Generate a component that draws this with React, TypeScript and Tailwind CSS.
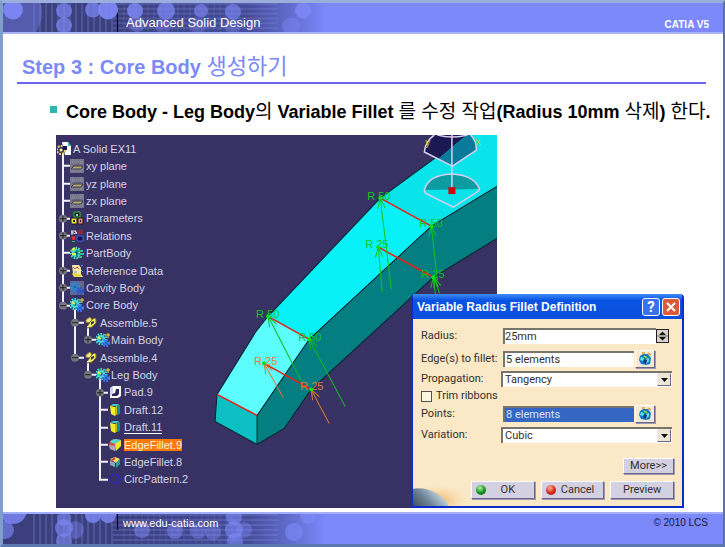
import { ReactNode } from 'react';
import { clsx } from 'clsx';

type IconName =
  | 'part' | 'plane' | 'params' | 'relations' | 'body' | 'reference' | 'cavity'
  | 'gearPlus' | 'assemble' | 'pad' | 'draft' | 'fillet' | 'filletSmall' | 'pattern';

type TreeRow = {
  label: string;
  icon: IconName;
  depth: number;
  knob?: '+' | '-';
  // depths whose rail passes through this row
  through?: number[];
  last?: boolean;
  opens?: boolean;
  mark?: 'underline' | 'selected';
};

const treeRows: TreeRow[] = [
  { label: 'A Solid EX11', icon: 'part', depth: 0, opens: true },
  { label: 'xy plane', icon: 'plane', depth: 1 },
  { label: 'yz plane', icon: 'plane', depth: 1 },
  { label: 'zx plane', icon: 'plane', depth: 1 },
  { label: 'Parameters', icon: 'params', depth: 1, knob: '+' },
  { label: 'Relations', icon: 'relations', depth: 1, knob: '+' },
  { label: 'PartBody', icon: 'body', depth: 1 },
  { label: 'Reference Data', icon: 'reference', depth: 1, knob: '+' },
  { label: 'Cavity Body', icon: 'cavity', depth: 1, knob: '+' },
  { label: 'Core Body', icon: 'gearPlus', depth: 1, knob: '-', last: true, opens: true },
  { label: 'Assemble.5', icon: 'assemble', depth: 2, knob: '-', opens: true },
  { label: 'Main Body', icon: 'gearPlus', depth: 3, knob: '+', through: [2], last: true },
  { label: 'Assemble.4', icon: 'assemble', depth: 2, knob: '-', last: true, opens: true },
  { label: 'Leg Body', icon: 'gearPlus', depth: 3, knob: '-', last: true, opens: true },
  { label: 'Pad.9', icon: 'pad', depth: 4, knob: '+' },
  { label: 'Draft.12', icon: 'draft', depth: 4 },
  { label: 'Draft.11', icon: 'draft', depth: 4, mark: 'underline' },
  { label: 'EdgeFillet.9', icon: 'fillet', depth: 4, mark: 'selected' },
  { label: 'EdgeFillet.8', icon: 'filletSmall', depth: 4 },
  { label: 'CircPattern.2', icon: 'pattern', depth: 4, last: true },
];

const railX = [0, 7, 19, 32, 44];
const railWidth = [1, 14, 28, 40, 52];

function Gear({ cx, cy, r, color }: { cx: number; cy: number; r: number; color: string }) {
  return (
    <g>
      <circle cx={cx} cy={cy} r={r} fill="none" stroke={color} strokeWidth="2.4" strokeDasharray="1.6 1.2" />
      <circle cx={cx} cy={cy} r={r - 1} fill={color} />
      <circle cx={cx} cy={cy} r={r / 3} fill="#1a5f9a" />
    </g>
  );
}

function TreeIcon({ name }: { name: IconName }) {
  const drawings: Record<IconName, ReactNode> = {
    part: (
      <>
        <path d="M5 0h6l3 4v9H8z" fill="#fff" />
        <path d="M11 0l3 4h-3z" fill="#28b8b0" />
        <circle cx="4" cy="8" r="4" fill="#3b3560" stroke="#e6cf7a" strokeWidth="2" strokeDasharray="2 1" />
        <circle cx="4" cy="8" r="1.5" fill="#fff3a8" />
        <path d="M6 4h4v4H6z" fill="#1a1840" />
      </>
    ),
    plane: (
      <>
        <path d="M0 0h14v14H0z" fill="#77768a" />
        <path d="M0 3h14M0 11h14M3 0v14M11 0v14" stroke="#918fa2" strokeWidth="1" strokeDasharray="1 1" />
        <path d="M1 10l3-3h9l-2 3z" fill="#b5a86c" stroke="#3d3c50" />
        <path d="M2 7l2-1h8" stroke="#55546a" fill="none" />
      </>
    ),
    params: (
      <>
        <path d="M4 1h6v5H4z" fill="#141414" stroke="#36c33b" />
        <path d="M1 7h6v6H1z" fill="#e4e13a" stroke="#1b1b1b" />
        <path d="M8 7h5v6H8z" fill="#e9876b" stroke="#1b1b1b" />
        <path d="M3 9h2v2H3zM10 9h1v2h-1z" fill="#24235f" />
        <path d="M6 3h2v2H6z" fill="#70f0ff" />
      </>
    ),
    relations: (
      <>
        <path d="M1 2h5M1 4h3M2 2v4M4 5l3-2M5 2l2 3" stroke="#e9e6f5" />
        <path d="M8 1h5v4H8z" fill="#8d2735" />
        <path d="M7 7h6v5H7z" fill="#10104a" stroke="#5260e8" />
        <circle cx="3.5" cy="9" r="2" fill="#ea2c2c" />
        <path d="M2 12h3v1H2z" fill="#31c840" />
      </>
    ),
    body: (
      <>
        <Gear cx={6} cy={7} r={5} color="#48e0c4" />
        <path d="M2 4l3-2M2 8h4" stroke="#e6f04a" strokeWidth="2" />
        <path d="M8 5h5M8 8h6M8 11h4" stroke="#2bc07e" strokeWidth="2" />
        <path d="M7 4v7" stroke="#14307c" />
      </>
    ),
    reference: (
      <>
        <path d="M2 1h7l2 3v6l2 3H5L3 9z" fill="#f5e6b2" />
        <path d="M3 3l2 2 2-2 2 2" stroke="#c8503a" fill="none" />
        <path d="M2 10c3-3 5 1 9 0v3H4z" fill="#e8d34c" />
        <path d="M11 2l2-1M11 6l2 2M4 8h3" stroke="#4ba3f0" strokeWidth="1" />
      </>
    ),
    cavity: (
      <>
        <path d="M0 0h14v14H0z" fill="#66658a" />
        <path d="M1 2h12M1 6h12M1 10h12M2 0v14M6 0v14" stroke="#2b82cc" strokeDasharray="1 1" />
        <Gear cx={5} cy={6} r={4} color="#3184cf" />
        <Gear cx={10} cy={10} r={3} color="#3050d0" />
      </>
    ),
    gearPlus: (
      <>
        <Gear cx={5} cy={6} r={5} color="#3fdcd2" />
        <path d="M2 4l3 2" stroke="#f0ee55" strokeWidth="2" />
        <Gear cx={10} cy={10} r={3} color="#3d78f0" />
        <path d="M12 0v5M9 2h5" stroke="#f0e23c" strokeWidth="1" />
      </>
    ),
    assemble: (
      <>
        <path d="M2 4l4-3 2 3-2 3-4-1z" fill="#efe98a" stroke="#9b8c2e" />
        <path d="M6 6l4-4 2 1v4l-4 4-5 1z" fill="#f0e85e" stroke="#7c7125" />
        <path d="M7 6l3-1v2L7 9z" fill="#35306a" />
        <path d="M3 11l3-2" stroke="#fff" />
      </>
    ),
    pad: (
      <>
        <path d="M2 3l3-2h8v10l-3 2H2z" fill="#fff" />
        <path d="M8 4h3v5l-2 2H4V9l3-1z" fill="#2c2858" />
        <path d="M2 3l3-1v6l-3 4z" fill="#d4cfe8" />
      </>
    ),
    draft: (
      <>
        <path d="M2 3l3-2h6L9 3z" fill="#42c8cc" />
        <path d="M2 3l5 1v9l-4-2z" fill="#f4ec28" />
        <path d="M7 4l4-2v8l-4 3z" fill="#c6b70c" />
        <path d="M9 3l3-1v9l-3 1z" fill="#148b98" />
      </>
    ),
    fillet: (
      <>
        <path d="M1 6Q2 1 8 1l5 1-5 5v6l-6-2z" fill="#d95048" />
        <path d="M2 4Q4 1 8 1l5 1-6 4z" fill="#54d8ce" />
        <path d="M7 6l6-4v6l-5 5z" fill="#f3e43b" />
        <path d="M1 7l6 1v5l-5-2z" fill="#a9a7ba" />
      </>
    ),
    filletSmall: (
      <>
        <path d="M2 4l5-2 5 2-4 4z" fill="#efe45a" />
        <path d="M2 5l5 3v4l-5-2z" fill="#87a7b8" />
        <path d="M8 8l4-4v5l-4 4z" fill="#2a9e9a" />
        <path d="M3 6l4-3" stroke="#cf4640" strokeWidth="2" />
      </>
    ),
    pattern: (
      <circle cx="7" cy="7" r="4.5" fill="none" stroke="#2423e0" strokeWidth="2" strokeDasharray="2 1.5" />
    ),
  };
  return (
    <svg className="size-[14px] shrink-0" viewBox="0 0 14 14" aria-hidden="true">
      {drawings[name]}
    </svg>
  );
}

function Rails({ row }: { row: TreeRow }) {
  const x = railX[row.depth];
  const next = railX[row.depth + 1];
  return (
    <svg
      className="h-full shrink-0 overflow-visible"
      width={railWidth[row.depth]}
      viewBox={`0 0 ${railWidth[row.depth]} 18`}
      preserveAspectRatio="none"
      aria-hidden="true"
    >
      <g stroke="#f2f0fa" strokeWidth="2">
        {row.through?.map((d) => <path key={d} d={`M${railX[d]} -1v20`} />)}
        {row.opens && <path d={`M${next} 13v6`} />}
        {row.depth > 0 && <path d={`M${x} -1V${row.last ? 10 : 19}M${x} 9H${railWidth[row.depth]}`} />}
      </g>
      {row.knob && (
        <g>
          <circle cx={x} cy="9" r="4" fill="#77767c" />
          <path d={`M${x - 3} 9h6`} stroke="#1f1e26" strokeWidth="1" />
          {row.knob === '+' && <path d={`M${x} 6v6`} stroke="#1f1e26" strokeWidth="1" />}
        </g>
      )}
    </svg>
  );
}

function SpecTree() {
  return (
    <ul className="flex h-[348px] w-[154px] shrink-0 flex-col text-[11px] leading-3 text-[#d5d2e4]">
      {treeRows.map((row) => (
        <li key={row.label} className="flex min-h-0 flex-1 items-center whitespace-nowrap">
          <Rails row={row} />
          <TreeIcon name={row.icon} />
          <span
            className={clsx(
              row.depth === 3 ? 'ml-px' : 'ml-[2px]',
              row.mark === 'underline' && 'border-b border-white',
              row.mark === 'selected' && 'bg-[#ff7a0a] text-[#fff3d8]',
            )}
          >
            {row.label}
          </span>
        </li>
      ))}
    </ul>
  );
}

const arrows = [
  { from: [382, 292], to: [378, 247], color: '#12c41c' },
  { from: [391, 289], to: [380, 198], color: '#12c41c' },
  { from: [437, 280], to: [431, 226], color: '#12c41c' },
  { from: [435, 294], to: [433, 277], color: '#12c41c' },
  { from: [439, 293], to: [434, 277], color: '#12c41c' },
  { from: [301, 380], to: [268, 316], color: '#12b81c' },
  { from: [345, 406], to: [309, 339], color: '#12b81c' },
  { from: [283, 397], to: [264, 363], color: '#d9762c' },
  { from: [329, 423], to: [311, 389], color: '#d9762c' },
];

const radii = [
  { x: 367, y: 200, text: 'R 50', color: '#12c41c' },
  { x: 419, y: 227, text: 'R 50', color: '#12c41c' },
  { x: 365, y: 248, text: 'R 25', color: '#12c41c' },
  { x: 421, y: 278, text: 'R 25', color: '#12c41c' },
  { x: 256, y: 318, text: 'R 50', color: '#12c41c' },
  { x: 298, y: 341, text: 'R 50', color: '#12c41c' },
  { x: 254, y: 365, text: 'R 25', color: '#e27f33' },
  { x: 300, y: 390, text: 'R 25', color: '#e27f33' },
];

const nodes = [[380, 198], [431, 226], [378, 247], [433, 277], [268, 316], [309, 339], [264, 363], [311, 389]];

function Arrow({ from, to, color }: { from: number[]; to: number[]; color: string }) {
  const angle = Math.atan2(from[1] - to[1], from[0] - to[0]);
  const wing = (turn: number) =>
    `M${to[0]} ${to[1]}L${to[0] + 11 * Math.cos(angle + turn)} ${to[1] + 11 * Math.sin(angle + turn)}`;
  return <path d={`M${from[0]} ${from[1]}L${to[0]} ${to[1]}${wing(0.35)}${wing(-0.35)}`} stroke={color} />;
}

function LegModel() {
  return (
    <svg
      className="h-[373px] min-w-0 flex-1"
      viewBox="210 135 287 373"
      preserveAspectRatio="xMaxYMin slice"
      role="img"
      aria-label="Leg body with variable fillet radii"
    >
      <path d="M380 198L466 135H497V186L431 226z" fill="#08e4ea" />
      <path d="M268 316L380 198L431 226L309 339z" fill="#08f1f8" />
      <path d="M217 394L256 331L268 316L309 339L257 415z" fill="#5cfdff" />
      <path d="M257 415L309 339L431 226L497 186V238L433 277L311 389L284 428L257 444z" fill="#047e80" />
      <path d="M217 394L257 415V444L215 421z" fill="#0bbfc3" />
      <path
        d="M466 135L380 198L268 316L256 331L217 394L215 421L257 444L284 428L311 389L433 277L497 238M257 444V415L309 339L431 226L497 186"
        fill="none"
        stroke="#06232e"
      />
      <path
        d="M380 198L431 226M378 247L433 277M268 316L309 339M264 363L311 389M217 394L257 415"
        stroke="#ee1c12"
        strokeWidth="1.5"
      />
      <g fill="none">
        {arrows.map((a, i) => <Arrow key={i} {...a} />)}
      </g>
      <g fontSize="11" fontFamily="Liberation Sans, sans-serif">
        {radii.map((r, i) => <text key={i} x={r.x} y={r.y} fill={r.color}>{r.text}</text>)}
      </g>
      {nodes.map(([x, y]) => <circle key={`${x}-${y}`} cx={x} cy={y} r="2" fill="#0be010" />)}

      {/* compass */}
      <path d="M424 152Q425 142 433 135H466L438 159z" fill="#1c1852" />
      <path d="M438 159L466 135H471Q476 140 476 150L452 166z" fill="#087b9a" />
      <path d="M424 190Q428 175 451 174Q474 175 479 189z" fill="#0b9ba0" />
      <g fill="none" stroke="#dccdf2" strokeWidth="1.5">
        <path d="M434 135Q425 141 424 152L452 166L476 150Q476 140 470 135M437 135Q452 139 467 135" />
        <path d="M424 190Q428 175 451 174Q474 175 479 189L478 191L453 207L425 193z" />
        <path d="M451.500 135V188" />
      </g>
      <path d="M448 187h7v7h-7z" fill="#d00808" />
      <g fontSize="10" fontFamily="Liberation Sans, sans-serif" fill="#c8c424">
        <text x="425" y="146">y</text>
        <text x="475" y="145">x</text>
      </g>
    </svg>
  );
}

function PickIcon() {
  return (
    <svg className="size-[14px]" viewBox="0 0 14 14" aria-hidden="true">
      <path d="M2 4l3-2h5l3 4-1 6-4 1-5-1-2-4z" fill="#1878c8" />
      <path d="M3 5l3 1-1 3-3-1zM8 7l3-1v3l-3 3z" fill="#5fe0e8" />
      <path d="M5 10l2-3 2 1-1 4z" fill="#10307c" />
      <path d="M4 1h3M10 1l3 2" stroke="#e09a2e" strokeWidth="1.5" />
      <path d="M6 4l3 2" stroke="#7fd23c" strokeWidth="2" />
    </svg>
  );
}

const sunken = 'border-t-2 border-l-2 border-[#77746c]';
const raised = 'border border-t-white border-l-white border-r-[#69668a] border-b-[#69668a] shadow-[1px_1px_0_#9c99b5]';

function PickField({ id, label, value, active }: { id: string; label: string; value: string; active?: boolean }) {
  return (
    <>
      <label htmlFor={id} className="w-[82px] shrink-0">{label}</label>
      <input
        id={id}
        readOnly
        defaultValue={value}
        className={clsx('h-4 w-[131px] min-w-0 rounded-none pl-px outline-none', sunken, active ? 'bg-[#3467c4] text-[#d9e4fa]' : 'bg-white')}
      />
      <button type="button" aria-label={`Edit ${label}`} className={clsx('ml-px flex h-[18px] w-5 items-center justify-center bg-[#f3ead6]', raised)}>
        <PickIcon />
      </button>
    </>
  );
}

function SelectField({ id, label, value }: { id: string; label: string; value: string }) {
  return (
    <>
      <label htmlFor={id} className="w-20 shrink-0">{label}</label>
      <div className="relative flex-1">
        <select id={id} defaultValue={value} className={clsx('block h-4 w-full appearance-none rounded-none bg-white pl-[2px] leading-3 outline-none', sunken)}>
          <option>{value}</option>
        </select>
        <span className="pointer-events-none absolute top-[2px] right-px flex h-[13px] w-[14px] items-center justify-center border border-[#efe8da] border-r-[#69668a] border-b-[#69668a] bg-[#ece5d8]">
          <svg className="h-[4px] w-[7px]" viewBox="0 0 7 4" aria-hidden="true"><path d="M0 0h7L3.500 4z" fill="#111" /></svg>
        </span>
      </div>
    </>
  );
}

function ActionButton({ children, dot }: { children: ReactNode; dot?: 'green' | 'red' }) {
  return (
    <button type="button" className={clsx('flex h-[18px] flex-1 items-center bg-[#d3d0e2] px-1 leading-3', raised)}>
      {dot && (
        <span
          className={clsx(
            'size-[10px] shrink-0 rounded-full',
            dot === 'green'
              ? 'bg-[radial-gradient(circle_at_40%_30%,#b8f0a8,#1c9a22_50%,#0b5a10)]'
              : 'bg-[radial-gradient(circle_at_40%_30%,#ffb8a0,#d8301c_50%,#7c140c)]',
          )}
        />
      )}
      <span className="flex-1 text-center">{children}</span>
    </button>
  );
}

function FilletDialog() {
  return (
    <section
      aria-label="Variable Radius Fillet Definition"
      className="absolute right-0 bottom-0 w-[273px] overflow-hidden rounded-t-[4px] border-x-2 border-b-2 border-[#0a2fc8] bg-[#fae8c6] font-[Roboto,sans-serif] text-[11px] whitespace-nowrap text-[#33302c]"
    >
      <header className="flex h-[25px] items-center justify-between bg-linear-to-b from-[#3f8cf8] via-[#0a53e4] via-25% to-[#0a4fdc] pr-[2px] pl-[4px]">
        <h2 className="font-['Liberation_Sans',sans-serif] text-[12px] font-bold text-white">Variable Radius Fillet Definition</h2>
        <div className="flex gap-[2px]">
          <button type="button" aria-label="Help" className="flex size-[18px] items-center justify-center rounded-[3px] border border-white bg-[#3a72ea] text-[15px] leading-4 font-bold text-white">
            ?
          </button>
          <button type="button" aria-label="Close" className="flex size-[18px] items-center justify-center rounded-[3px] border border-white bg-[#dc5a38]">
            <svg className="size-[12px]" viewBox="0 0 12 12" aria-hidden="true"><path d="M2 2l8 8M10 2l-8 8" stroke="#fff" strokeWidth="2" /></svg>
          </button>
        </div>
      </header>

      <form className="px-2 pt-2" onSubmit={(e) => e.preventDefault()}>
        <div className="flex h-[18px] items-center">
          <label htmlFor="radius" className="w-[82px] shrink-0">Radius:</label>
          <input id="radius" defaultValue="25mm" className={clsx('h-4 min-w-0 flex-1 rounded-none bg-white outline-none', sunken)} />
          <button type="button" aria-label="Step radius" className="mr-[5px] flex h-[14px] w-[13px] items-center justify-center border border-[#222] bg-[#d8d4cc]">
            <svg className="h-[12px] w-[11px]" viewBox="0 0 11 12" aria-hidden="true">
              <path d="M2 5l3.500-3.500L9 5zM2 7l3.500 3.500L9 7z" fill="#111" />
              <path d="M0 6h11" stroke="#111" strokeWidth=".5" />
            </svg>
          </button>
        </div>
        <div className="mt-[5px] flex h-[18px] items-center">
          <PickField id="edges" label="Edge(s) to fillet:" value="5 elements" />
        </div>
        <div className="mt-[2px] flex h-[18px] items-center pr-[2px]">
          <SelectField id="propagation" label="Propagation:" value="Tangency" />
        </div>
        <label className="flex h-4 items-center gap-1">
          <input type="checkbox" className="size-[11px] appearance-none border border-[#55524c] bg-[#fdf8e0]" />
          Trim ribbons
        </label>
        <div className="mt-px flex h-[18px] items-center">
          <PickField id="points" label="Points:" value="8 elements" active />
        </div>
        <div className="mt-[3px] flex h-[18px] items-center pr-[2px]">
          <SelectField id="variation" label="Variation:" value="Cubic" />
        </div>
        <div className="mt-[14px] flex justify-end">
          <button type="button" className={clsx('h-4 w-[51px] bg-[#d3d0e2] leading-3', raised)}>More&gt;&gt;</button>
        </div>
      </form>

      <div className="flex h-8 items-start">
        <svg className="h-8 w-[58px] shrink-0" viewBox="0 0 58 32" aria-hidden="true">
          <defs>
            <radialGradient id="glow" cx="0.4" cy="0.8" r="0.6">
              <stop offset="0" stopColor="#f2a850" />
              <stop offset="1" stopColor="#fae8c6" stopOpacity="0" />
            </radialGradient>
            <linearGradient id="planet" x1="0" y1="1" x2="0.8" y2="0">
              <stop offset="0" stopColor="#262a33" />
              <stop offset="0.6" stopColor="#6f8598" />
              <stop offset="1" stopColor="#c9dbe2" />
            </linearGradient>
          </defs>
          <path d="M0 4h58v28H0z" fill="url(#glow)" />
          <ellipse cx="14" cy="29" rx="23" ry="13" transform="rotate(22 14 29)" fill="url(#planet)" />
        </svg>
        <div className="flex flex-1 gap-[6px] pt-[7px] pr-2">
          <ActionButton dot="green">OK</ActionButton>
          <ActionButton dot="red">Cancel</ActionButton>
          <ActionButton>Preview</ActionButton>
        </div>
      </div>
    </section>
  );
}

// Dotted circuit texture that fades into the flat band colour
function BandArt({ id, circles }: { id: string; circles: number[][] }) {
  return (
    <svg className="col-start-1 row-start-1 h-full w-[340px]" viewBox="0 0 340 30" preserveAspectRatio="none" aria-hidden="true">
      <defs>
        <linearGradient id={`${id}-fade`}>
          <stop offset="0" stopColor="#3a3f7c" />
          <stop offset="0.35" stopColor="#3b4080" />
          <stop offset="0.72" stopColor="#444b98" />
          <stop offset="0.95" stopColor="#7b89fb" />
        </linearGradient>
        <pattern id={`${id}-v`} width="6" height="30" patternUnits="userSpaceOnUse">
          <path d="M1 0v30" stroke="#8890dc" strokeOpacity=".5" />
        </pattern>
        <pattern id={`${id}-h`} width="40" height="5" patternUnits="userSpaceOnUse">
          <path d="M0 1h40" stroke="#8890e0" strokeOpacity=".5" />
        </pattern>
      </defs>
      <path d="M0 0h340v30H0z" fill={`url(#${id}-fade)`} />
      <path d="M26 0h85v30H26z" fill={`url(#${id}-v)`} />
      <path d="M110 0h165v30H110z" fill={`url(#${id}-h)`} />
      <path d="M120 0h110v30H120z" fill={`url(#${id}-v)`} opacity=".4" />
      {circles.map(([x, y, r, o], i) => (
        <circle key={i} cx={x} cy={y} r={r} fill="#7f8af8" fillOpacity={o / 10} />
      ))}
    </svg>
  );
}

const topCircles = [
  [2, 10, 37, 4], [10, 7, 10, 9], [61, 8, 8, 7], [61, 23, 8, 7], [90, 7, 8, 7], [105, 7, 10, 9],
  [132, 8, 8, 8], [163, 8, 9, 7], [134, 22, 8, 4], [198, 8, 7, 6], [230, 9, 8, 6],
  [160, 24, 8, 3], [195, 24, 8, 3], [230, 24, 8, 3], [300, 8, 8, 8], [288, 24, 9, 4],
];

const bottomCircles = [
  [10, -4, 14, 8], [2, 16, 9, 6], [61, 5, 7, 6], [61, 14, 9, 6], [61, 27, 8, 6], [72, 16, 9, 4],
  [90, 1, 8, 8], [105, 1, 8, 8], [139, 16, 8, 5], [172, 17, 8, 5], [195, 17, 8, 4], [210, 18, 8, 4],
  [231, 3, 8, 6], [231, 16, 9, 6], [232, 27, 8, 6], [241, 16, 8, 4], [291, 18, 9, 6], [305, 2, 8, 6],
];

function Ko({ children }: { children: ReactNode }) {
  return <span className="text-[19px] font-normal">{children}</span>;
}

export default function App() {
  return (
    <div className="border-t-[3px] border-r-2 border-b-[3px] border-l-[3px] border-t-[#9aaddb] border-r-[#5d729f] border-b-[#5878ae] border-l-[#7f9fca] bg-white font-['Liberation_Sans','Noto_Sans_CJK_KR',sans-serif]">
      <header className="grid h-[31px] items-stretch overflow-hidden border-b-2 border-[#a9b3fb] bg-[#7b89fb] text-white">
        <BandArt id="top" circles={topCircles} />
        <div className="col-start-1 row-start-1 flex items-end justify-between pr-[14px] pl-[114px]">
          <p className="h-[19px] border-l border-black pl-2 text-[13px] leading-[19px]">Advanced Solid Design</p>
          <p className="pb-px text-[10px] leading-3 font-bold">CATIA V5</p>
        </div>
      </header>

      <main className="pt-[19px]">
        <h1 className="mr-[17px] ml-[14px] h-[31px] border-b-2 border-[#6c66f4] pl-[5px] text-[20px] leading-7 font-bold whitespace-nowrap text-[#7b8af8]">
          Step 3 : Core Body <span className="text-[22px] font-normal">생성하기</span>
        </h1>

        <ul className="mt-4 pl-[47px]">
          <li className="flex h-6 gap-[9px] text-[18px] leading-6 font-bold whitespace-nowrap text-black">
            <span className="mt-[6px] size-[7px] shrink-0 bg-[#30b4b2]" />
            <span>
              Core Body - Leg Body<Ko>의</Ko> Variable Fillet <Ko>를 수정 작업</Ko>(Radius 10mm <Ko>삭제</Ko>) <Ko>한다</Ko>.
            </span>
          </li>
        </ul>

        <div className="relative mt-[11px] mr-[39px] ml-[53px]">
          <div className="flex w-[70.3%] items-start overflow-hidden bg-[#373263]">
            <div className="pt-[5px]">
              <SpecTree />
            </div>
            <LegModel />
          </div>
          <FilletDialog />
        </div>
      </main>

      <footer className="mt-1 grid h-8 overflow-hidden border-t-2 border-[#a3aefb] bg-[#7b89fb]">
        <BandArt id="bottom" circles={bottomCircles} />
        <div className="col-start-1 row-start-1 flex items-start justify-between pr-[15px] pl-[114px]">
          <p className="h-4 border-l border-black pl-[5px] text-[11px] leading-[18px]">
            <a href="http://www.edu-catia.com" className="text-white">www.edu-catia.com</a>
          </p>
          <p className="text-[10px] leading-[18px] text-[#14163c]">© 2010 LCS</p>
        </div>
      </footer>
    </div>
  );
}
